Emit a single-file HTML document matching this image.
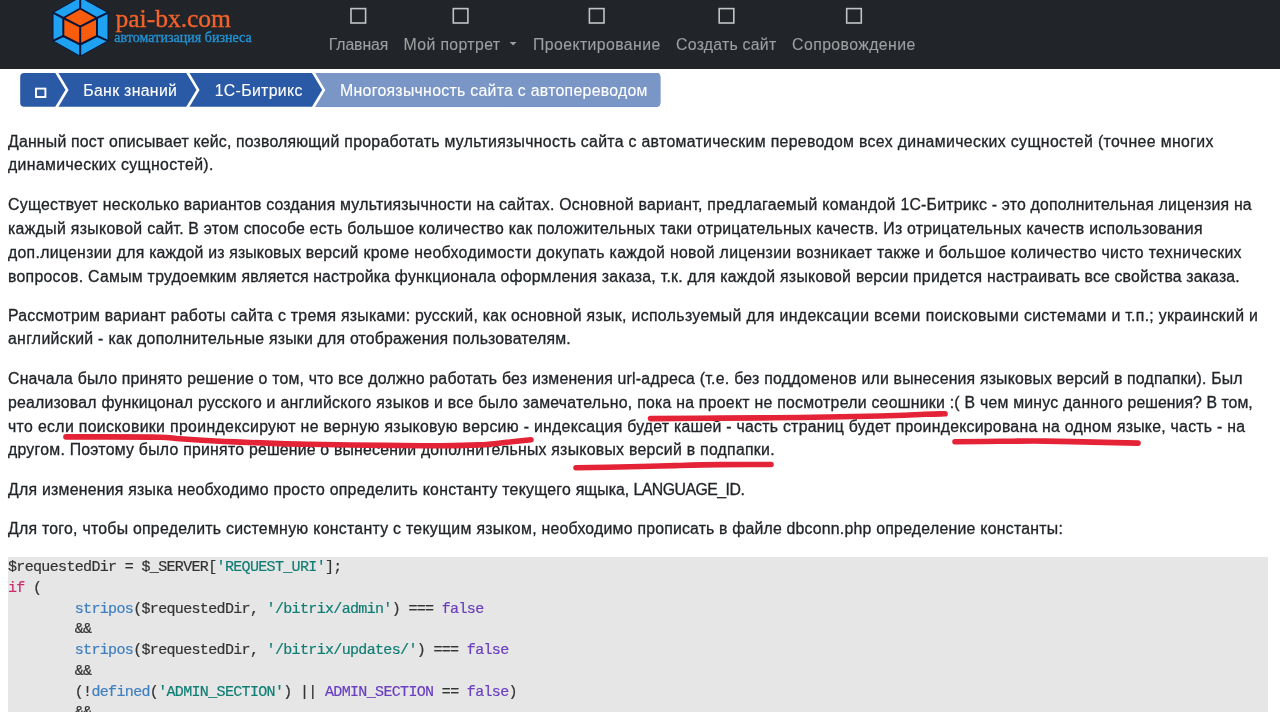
<!DOCTYPE html>
<html lang="ru"><head><meta charset="utf-8"><title>Многоязычность сайта с автопереводом</title>
<style>
html,body{margin:0;padding:0;background:#fff;}
html{width:1280px;height:712px;overflow:hidden;}
body{width:1280px;height:712px;position:relative;overflow:hidden;font-family:"Liberation Sans",sans-serif;color:#212529;}
.hdr{position:absolute;left:0;top:0;width:1280px;height:68.8px;background:#212529;}
.t{position:absolute;white-space:pre;font-family:"Liberation Sans",sans-serif;font-size:15.83px;line-height:20px;color:#212529;-webkit-text-stroke:0.3px currentColor;}
.nv{color:#9c9ea0;-webkit-text-stroke-width:0.12px;}
.bc{color:#fff;-webkit-text-stroke-width:0.12px;}
.lg{position:absolute;white-space:pre;font-family:"Liberation Serif",serif;}
svg{position:absolute;left:0;top:0;display:block;overflow:hidden;}
.code{position:absolute;left:8px;top:557px;width:1260px;height:155px;overflow:hidden;background:#e6e6e6;}
.code pre{margin:0;padding-top:1px;font-family:"Liberation Mono",monospace;font-size:15px;letter-spacing:-0.66px;line-height:20.78px;color:#333;white-space:pre;-webkit-text-stroke:0.2px currentColor;}
.k{color:#cb2a6f}.s{color:#0f7d74}.f{color:#3d7fc1}.c{color:#6a3fc0}
#w{position:absolute;left:0;top:0;width:1280px;height:712px;overflow:hidden;will-change:transform;}
</style></head><body><div id="w">
<div class="hdr"></div>
<svg width="1280" height="712" viewBox="0 0 1280 712">
 <!-- logo hexagon -->
 <polygon points="80.2,-2.8 108,12.6 108,40.9 80.2,56.2 53,40.9 53,12.6" fill="#1fa2f1" stroke="#08153a" stroke-width="1"/>
 <g stroke="#08153a" stroke-width="2" stroke-linejoin="round">
  <line x1="80.2" y1="-2.8" x2="80.2" y2="8.5"/><line x1="108" y1="12.6" x2="97" y2="18"/>
  <line x1="108" y1="40.9" x2="97" y2="36"/><line x1="80.2" y1="56.2" x2="80.2" y2="44.5"/>
  <line x1="53" y1="40.9" x2="63.3" y2="36"/><line x1="53" y1="12.6" x2="63.3" y2="18"/>
  <polygon points="80.2,8.5 97,18 97,36 80.2,44.5 63.3,36 63.3,18" fill="#f95c0b"/>
  <polyline points="63.3,18 80.2,26.7 97,18" fill="none"/><line x1="80.2" y1="26.7" x2="80.2" y2="44.5"/>
 </g>
 <!-- nav icons -->
 <g fill="none" stroke="#c2c3c4" stroke-width="1.6">
  <rect x="351" y="8.6" width="14.6" height="14.4"/>
  <rect x="453.3" y="8.6" width="14.6" height="14.4"/>
  <rect x="589.4" y="8.6" width="14.6" height="14.4"/>
  <rect x="719.2" y="8.6" width="14.6" height="14.4"/>
  <rect x="846.7" y="8.6" width="14.6" height="14.4"/>
 </g>
 <polygon points="509.6,42 516.6,42 513.1,45.6" fill="#9c9ea0"/>
 <!-- breadcrumb -->
 <path d="M24.2,73 H656.3 a4,4 0 0 1 4,4 V102.8 a4,4 0 0 1 -4,4 H24.2 a4,4 0 0 1 -4,-4 V77 a4,4 0 0 1 4,-4 Z" fill="#2a59a6"/>
 <path d="M313,73 H656.3 a4,4 0 0 1 4,4 V102.8 a4,4 0 0 1 -4,4 H313 L323.7,89.9 Z" fill="#7a96c7"/>
 <g fill="none" stroke="#fff" stroke-width="2.7" stroke-linejoin="miter">
  <polyline points="56.3,72 67.0,89.9 56.3,107.8"/>
  <polyline points="187.3,72 198.0,89.9 187.3,107.8"/>
  <polyline points="313.0,72 323.7,89.9 313.0,107.8"/>
 </g>
 <rect x="36" y="88.6" width="9.4" height="8.4" fill="none" stroke="#fff" stroke-width="1.9"/>
</svg>

<div class="t" style="top:132px;left:8.00px;letter-spacing:0.203px">Данный пост описы</div>
<div class="t" style="top:132px;left:155.51px;letter-spacing:0.198px">вает кейс, </div>
<div class="t" style="top:132px;left:236.11px;letter-spacing:0.158px">позволяющ</div>
<div class="t" style="top:132px;left:321.37px;letter-spacing:0.279px">ий </div>
<div class="t" style="top:132px;left:344.30px;letter-spacing:0.288px">проработать мультиязычность </div>
<div class="t" style="top:132px;left:580.87px;letter-spacing:0.303px">сайта с </div>
<div class="t" style="top:132px;left:641.45px;letter-spacing:0.336px">автоматическим переводом </div>
<div class="t" style="top:132px;left:859.03px;letter-spacing:0.352px">всех </div>
<div class="t" style="top:132px;left:897.71px;letter-spacing:0.364px">динамических </div>
<div class="t" style="top:132px;left:1010.83px;letter-spacing:0.367px">сущностей (точнее многих</div>
<div class="t" style="top:155px;left:8.00px;letter-spacing:0.356px">динамических сущн</div>
<div class="t" style="top:155px;left:160.04px;letter-spacing:0.379px">остей).</div>
<div class="t" style="top:195px;left:8.00px;letter-spacing:0.266px">Существует нескол</div>
<div class="t" style="top:195px;left:154.66px;letter-spacing:0.144px">ько вариантов </div>
<div class="t" style="top:195px;left:266.13px;letter-spacing:0.174px">создан</div>
<div class="t" style="top:195px;left:317.58px;letter-spacing:0.224px">ия </div>
<div class="t" style="top:195px;left:340.07px;letter-spacing:0.248px">мультиязычности на сайтах. </div>
<div class="t" style="top:195px;left:559.21px;letter-spacing:0.250px">Основной </div>
<div class="t" style="top:195px;left:638.43px;letter-spacing:0.264px">вариант, предлагаемый командой </div>
<div class="t" style="top:195px;left:900.39px;letter-spacing:0.218px">1С-Битрикс </div>
<div class="t" style="top:195px;left:991.84px;letter-spacing:0.186px">- это дополнительная лицензия на</div>
<div class="t" style="top:219px;left:8.00px;letter-spacing:0.329px">каждый языковой с</div>
<div class="t" style="top:219px;left:155.40px;letter-spacing:0.207px">айт. В этом </div>
<div class="t" style="top:219px;left:243.67px;letter-spacing:0.211px">способе е</div>
<div class="t" style="top:219px;left:318.64px;letter-spacing:0.213px">сть </div>
<div class="t" style="top:219px;left:347.31px;letter-spacing:0.229px">большое количество как </div>
<div class="t" style="top:219px;left:536.97px;letter-spacing:0.226px">положительных </div>
<div class="t" style="top:219px;left:659.90px;letter-spacing:0.219px">таки отрицательных качеств. </div>
<div class="t" style="top:219px;left:883.34px;letter-spacing:0.202px">Из </div>
<div class="t" style="top:219px;left:906.98px;letter-spacing:0.236px">отрицательных </div>
<div class="t" style="top:219px;left:1026.42px;letter-spacing:0.252px">качеств использования</div>
<div class="t" style="top:243px;left:8.00px;letter-spacing:0.292px">доп.лицензии для к</div>
<div class="t" style="top:243px;left:156.48px;letter-spacing:0.171px">аждой из </div>
<div class="t" style="top:243px;left:229.20px;letter-spacing:0.158px">языковых ве</div>
<div class="t" style="top:243px;left:323.18px;letter-spacing:0.280px">рсий </div>
<div class="t" style="top:243px;left:363.40px;letter-spacing:0.361px">кроме необходимости </div>
<div class="t" style="top:243px;left:536.48px;letter-spacing:0.347px">докупать каждой </div>
<div class="t" style="top:243px;left:669.96px;letter-spacing:0.304px">новой лицензии возникает </div>
<div class="t" style="top:243px;left:876.91px;letter-spacing:0.259px">также </div>
<div class="t" style="top:243px;left:925.06px;letter-spacing:0.211px">и </div>
<div class="t" style="top:243px;left:938.73px;letter-spacing:0.295px">большое </div>
<div class="t" style="top:243px;left:1010.81px;letter-spacing:0.313px">количество чисто технических</div>
<div class="t" style="top:267px;left:8.00px;letter-spacing:0.272px">вопросов. Самым т</div>
<div class="t" style="top:267px;left:155.14px;letter-spacing:0.150px">рудоемким </div>
<div class="t" style="top:267px;left:241.44px;letter-spacing:0.120px">является </div>
<div class="t" style="top:267px;left:313.17px;letter-spacing:0.094px">н</div>
<div class="t" style="top:267px;left:322.02px;letter-spacing:0.216px">астройка функционала оформления </div>
<div class="t" style="top:267px;left:601.83px;letter-spacing:0.248px">заказа, </div>
<div class="t" style="top:267px;left:660.65px;letter-spacing:0.274px">т.к. для каждой языковой </div>
<div class="t" style="top:267px;left:855.88px;letter-spacing:0.182px">версии </div>
<div class="t" style="top:267px;left:913.00px;letter-spacing:0.263px">придется </div>
<div class="t" style="top:267px;left:987.06px;letter-spacing:0.152px">настраивать все свойства заказа.</div>
<div class="t" style="top:306px;left:8.00px;letter-spacing:0.238px">Рассмотрим вариан</div>
<div class="t" style="top:306px;left:158.46px;letter-spacing:0.271px">т работы </div>
<div class="t" style="top:306px;left:230.69px;letter-spacing:0.250px">сайта с тремя </div>
<div class="t" style="top:306px;left:341.05px;letter-spacing:0.235px">языками: русский, как основной </div>
<div class="t" style="top:306px;left:586.60px;letter-spacing:0.316px">язык, </div>
<div class="t" style="top:306px;left:631.43px;letter-spacing:0.367px">используемый для индексации </div>
<div class="t" style="top:306px;left:874.10px;letter-spacing:0.418px">всеми </div>
<div class="t" style="top:306px;left:925.69px;letter-spacing:0.391px">поисковыми </div>
<div class="t" style="top:306px;left:1023.95px;letter-spacing:0.310px">системами и т.п.; украинский и</div>
<div class="t" style="top:329px;left:8.00px;letter-spacing:0.301px">английский - как до</div>
<div class="t" style="top:329px;left:155.65px;letter-spacing:0.261px">полнительные </div>
<div class="t" style="top:329px;left:269.04px;letter-spacing:0.203px">языки для </div>
<div class="t" style="top:329px;left:349.88px;letter-spacing:0.171px">отображения пользователям.</div>
<div class="t" style="top:369px;left:8.00px;letter-spacing:0.199px">Сначала было принято решение </div>
<div class="t" style="top:369px;left:258.62px;letter-spacing:0.190px">о том, что </div>
<div class="t" style="top:369px;left:337.99px;letter-spacing:0.232px">все должно работать без </div>
<div class="t" style="top:369px;left:531.93px;letter-spacing:0.177px">изменения </div>
<div class="t" style="top:369px;left:617.59px;letter-spacing:0.233px">url-адреса </div>
<div class="t" style="top:369px;left:699.77px;letter-spacing:0.268px">(т.е. без поддоменов </div>
<div class="t" style="top:369px;left:861.51px;letter-spacing:0.187px">или </div>
<div class="t" style="top:369px;left:893.59px;letter-spacing:0.171px">вынесения </div>
<div class="t" style="top:369px;left:979.91px;letter-spacing:0.187px">языковых версий в подпапки). Был</div>
<div class="t" style="top:393px;left:8.00px;letter-spacing:0.215px">реализовал функицонал русского </div>
<div class="t" style="top:393px;left:266.56px;letter-spacing:0.296px">и английского </div>
<div class="t" style="top:393px;left:376.28px;letter-spacing:0.266px">языков и все было </div>
<div class="t" style="top:393px;left:522.64px;letter-spacing:0.245px">замечательно, </div>
<div class="t" style="top:393px;left:637.16px;letter-spacing:0.237px">пока на </div>
<div class="t" style="top:393px;left:698.86px;letter-spacing:0.261px">проект не посмотрели </div>
<div class="t" style="top:393px;left:871.44px;letter-spacing:0.253px">сеошники </div>
<div class="t" style="top:393px;left:949.69px;letter-spacing:0.237px">:( В чем </div>
<div class="t" style="top:393px;left:1013.18px;letter-spacing:0.207px">минус данного </div>
<div class="t" style="top:393px;left:1127.55px;letter-spacing:0.045px">решения? В том,</div>
<div class="t" style="top:417px;left:8.00px;letter-spacing:0.344px">что если поисковики проиндексируют </div>
<div class="t" style="top:417px;left:300.58px;letter-spacing:0.315px">не верную </div>
<div class="t" style="top:417px;left:384.43px;letter-spacing:0.315px">языковую версию - </div>
<div class="t" style="top:417px;left:534.00px;letter-spacing:0.257px">индексация </div>
<div class="t" style="top:417px;left:627.16px;letter-spacing:0.260px">будет </div>
<div class="t" style="top:417px;left:674.00px;letter-spacing:0.258px">кашей - часть страниц </div>
<div class="t" style="top:417px;left:848.83px;letter-spacing:0.257px">будет </div>
<div class="t" style="top:417px;left:895.66px;letter-spacing:0.247px">проиндексирована </div>
<div class="t" style="top:417px;left:1042.10px;letter-spacing:0.260px">на одном языке, часть - на</div>
<div class="t" style="top:440px;left:8.00px;letter-spacing:0.250px">другом. Поэтому было принято </div>
<div class="t" style="top:440px;left:248.96px;letter-spacing:0.186px">решение о </div>
<div class="t" style="top:440px;left:333.92px;letter-spacing:0.214px">вынесении дополнительных </div>
<div class="t" style="top:440px;left:551.29px;letter-spacing:0.265px">языковых </div>
<div class="t" style="top:440px;left:628.89px;letter-spacing:0.283px">версий в </div>
<div class="t" style="top:440px;left:700.08px;letter-spacing:0.260px">подпапки.</div>
<div class="t" style="top:480px;left:8.00px;letter-spacing:0.249px">Для изменения языка необходимо </div>
<div class="t" style="top:480px;left:273.44px;letter-spacing:0.270px">просто </div>
<div class="t" style="top:480px;left:329.71px;letter-spacing:0.262px">определить константу текущего </div>
<div class="t" style="top:480px;left:575.76px;letter-spacing:-0.013px">ящыка, </div>
<div class="t" style="top:480px;left:633.51px;letter-spacing:-0.518px">LANGUAGE_ID.</div>
<div class="t" style="top:519px;left:8.00px;letter-spacing:0.261px">Для того, чтобы определить </div>
<div class="t" style="top:519px;left:225.95px;letter-spacing:0.293px">системную </div>
<div class="t" style="top:519px;left:313.24px;letter-spacing:0.294px">константу с текущим языком, </div>
<div class="t" style="top:519px;left:541.54px;letter-spacing:0.241px">необходимо </div>
<div class="t" style="top:519px;left:637.44px;letter-spacing:0.182px">прописать в файле </div>
<div class="t" style="top:519px;left:786.48px;letter-spacing:0.235px">dbconn.php </div>
<div class="t" style="top:519px;left:876.21px;letter-spacing:0.260px">определение константы:</div>
<div class="t nv" style="top:35px;left:328.80px;letter-spacing:-0.136px">Главная</div>
<div class="t nv" style="top:35px;left:403.50px;letter-spacing:0.372px">Мой портрет</div>
<div class="t nv" style="top:35px;left:533.10px;letter-spacing:0.392px">Проектирование</div>
<div class="t nv" style="top:35px;left:676.10px;letter-spacing:0.245px">Создать сайт</div>
<div class="t nv" style="top:35px;left:792.10px;letter-spacing:0.409px">Сопровождение</div>
<div class="t bc" style="top:81px;left:83.30px;letter-spacing:0.311px">Банк знаний</div>
<div class="t bc" style="top:81px;left:214.70px;letter-spacing:0.334px">1С-Битрикс</div>
<div class="t bc" style="top:81px;left:340.10px;letter-spacing:0.291px">Многоязычность сайта с автопереводом</div>
<div class="lg" style="top:3.50px;left:115.5px;font-size:25.6px;line-height:30.72px;color:#f2622a;-webkit-text-stroke:0.35px #f2622a;letter-spacing:-0.036px">pai-bx.com</div>
<div class="lg" style="top:30.17px;left:114.3px;font-size:14.0px;line-height:16.80px;color:#2191d2;-webkit-text-stroke:0.35px #2191d2;letter-spacing:0.031px">автоматизация бизнеса</div>
<div class="code"><pre>$requestedDir = $_SERVER[<span class="s">'REQUEST_URI'</span>];
<span class="k">if</span> (
        <span class="f">stripos</span>($requestedDir, <span class="s">'/bitrix/admin'</span>) === <span class="c">false</span>
        &amp;&amp;
        <span class="f">stripos</span>($requestedDir, <span class="s">'/bitrix/updates/'</span>) === <span class="c">false</span>
        &amp;&amp;
        (!<span class="f">defined</span>(<span class="s">'ADMIN_SECTION'</span>) || <span class="c">ADMIN_SECTION</span> == <span class="c">false</span>)
        &amp;&amp;
</pre></div>
<svg width="1280" height="712" viewBox="0 0 1280 712">
 <g fill="none" stroke="#e42336" stroke-width="5.6" stroke-linecap="round" stroke-linejoin="round">
  <path d="M66.0,436.9 C73.3,436.9 94.3,436.8 110.0,436.9 C125.7,436.9 148.3,436.9 160.0,437.2 C171.7,437.5 170.8,438.2 180.0,438.8 C189.2,439.4 205.0,440.4 215.0,441.0 C225.0,441.6 229.2,441.7 240.0,442.1 C250.8,442.5 268.3,443.2 280.0,443.6 C291.7,444.0 292.5,444.0 310.0,444.3 C327.5,444.6 363.2,445.1 385.0,445.4 C406.8,445.6 425.3,445.9 441.0,445.8 C456.7,445.7 468.0,445.5 479.0,444.9 C490.0,444.3 498.3,443.2 507.0,442.3 C515.7,441.4 527.0,440.1 531.0,439.7"/>
  <path d="M650.5,418.6 C662.1,418.5 695.1,418.3 720.0,418.1 C744.9,417.9 773.3,417.9 800.0,417.5 C826.7,417.1 859.2,416.5 880.0,416.0 C900.8,415.5 914.2,414.7 925.0,414.3 C935.8,413.9 941.7,413.9 945.0,413.8"/>
  <path d="M955.0,441.8 C962.5,441.7 985.0,441.4 1000.0,441.3 C1015.0,441.2 1027.7,440.9 1045.0,441.1 C1062.3,441.3 1088.5,442.1 1104.0,442.4 C1119.5,442.7 1132.3,443.0 1138.0,443.1"/>
  <path d="M576.0,467.8 C585.0,467.6 613.5,467.2 630.0,466.8 C646.5,466.4 660.0,466.0 675.0,465.6 C690.0,465.2 704.0,464.8 720.0,464.6 C736.0,464.4 762.5,464.5 771.0,464.5"/>
 </g>
</svg>
</div></body></html>
